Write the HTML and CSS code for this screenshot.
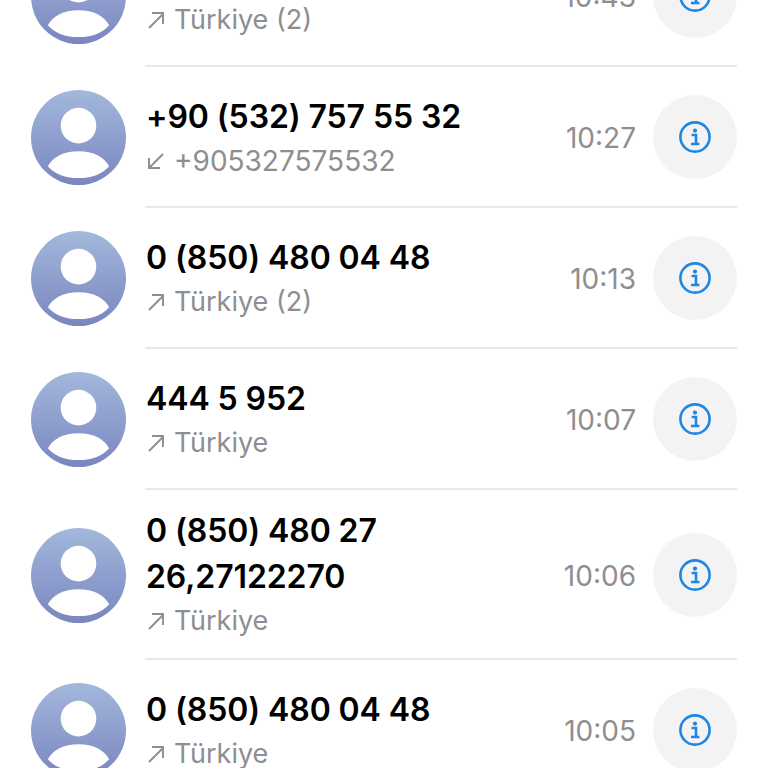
FILE: index.html
```html
<!DOCTYPE html>
<html lang="en">
<head>
  <meta charset="UTF-8">
  <meta name="viewport" content="width=device-width, initial-scale=1.0">
  <title>Recents</title>
  <link rel="stylesheet" href="styles.css">
</head>
<body>
  <svg class="defs" width="0" height="0" aria-hidden="true">
    <defs>
      <linearGradient id="avatarFill" x1="0" y1="0" x2="0" y2="1">
        <stop offset="0" stop-color="#a3b8dc"/>
        <stop offset="1" stop-color="#7a86bf"/>
      </linearGradient>
      <symbol id="avatar" viewBox="0 0 96 96">
        <circle cx="48" cy="48" r="48" fill="url(#avatarFill)"/>
        <circle cx="48" cy="36" r="18" fill="#fff"/>
        <path d="M17 77C22 68 33 62 48 62S74 68 79 77C72 85 61 89 48 89S24 85 17 77Z" fill="#fff"/>
      </symbol>
      <symbol id="info" viewBox="0 0 32 32">
        <circle cx="16" cy="16" r="14.6" fill="none" stroke="currentColor" stroke-width="2.6"/>
        <circle cx="16" cy="9.6" r="2.1" fill="currentColor"/>
        <path d="M12.6 14H17V22.4M12 23H20.4" fill="none" stroke="currentColor" stroke-width="2.6"/>
      </symbol>
      <symbol id="out" viewBox="0 0 20 20">
        <path d="M3 18L17 4M6 3H17V14" fill="none" stroke="currentColor" stroke-width="1.9"/>
      </symbol>
      <symbol id="in" viewBox="0 0 20 20">
        <path d="M17 3L3 17M3 7V17H14" fill="none" stroke="currentColor" stroke-width="1.9"/>
      </symbol>
    </defs>
  </svg>

  <ul class="calls">
    <li class="call">
      <svg class="avatar"><use href="#avatar"/></svg>
      <div class="call-main">
        <div class="call-text">
          <div class="number">0 (850) 480 04 48</div>
          <div class="detail place"><svg class="dir"><use href="#out"/></svg>Türkiye (2)</div>
        </div>
        <span class="time">10:43</span>
        <button class="info-btn"><svg class="info-icon"><use href="#info"/></svg></button>
      </div>
    </li>
    <li class="call">
      <svg class="avatar"><use href="#avatar"/></svg>
      <div class="call-main">
        <div class="call-text">
          <div class="number">+90 (532) 757 55 32</div>
          <div class="detail"><svg class="dir"><use href="#in"/></svg>+905327575532</div>
        </div>
        <span class="time">10:27</span>
        <button class="info-btn"><svg class="info-icon"><use href="#info"/></svg></button>
      </div>
    </li>
    <li class="call">
      <svg class="avatar"><use href="#avatar"/></svg>
      <div class="call-main">
        <div class="call-text">
          <div class="number">0 (850) 480 04 48</div>
          <div class="detail place"><svg class="dir"><use href="#out"/></svg>Türkiye (2)</div>
        </div>
        <span class="time">10:13</span>
        <button class="info-btn"><svg class="info-icon"><use href="#info"/></svg></button>
      </div>
    </li>
    <li class="call">
      <svg class="avatar"><use href="#avatar"/></svg>
      <div class="call-main">
        <div class="call-text">
          <div class="number">444 5 952</div>
          <div class="detail place"><svg class="dir"><use href="#out"/></svg>Türkiye</div>
        </div>
        <span class="time">10:07</span>
        <button class="info-btn"><svg class="info-icon"><use href="#info"/></svg></button>
      </div>
    </li>
    <li class="call">
      <svg class="avatar"><use href="#avatar"/></svg>
      <div class="call-main">
        <div class="call-text">
          <div class="number">0 (850) 480 27<br>26,27122270</div>
          <div class="detail place"><svg class="dir"><use href="#out"/></svg>Türkiye</div>
        </div>
        <span class="time">10:06</span>
        <button class="info-btn"><svg class="info-icon"><use href="#info"/></svg></button>
      </div>
    </li>
    <li class="call">
      <svg class="avatar"><use href="#avatar"/></svg>
      <div class="call-main">
        <div class="call-text">
          <div class="number">0 (850) 480 04 48</div>
          <div class="detail place"><svg class="dir"><use href="#out"/></svg>Türkiye</div>
        </div>
        <span class="time">10:05</span>
        <button class="info-btn"><svg class="info-icon"><use href="#info"/></svg></button>
      </div>
    </li>
  </ul>
</body>
</html>
```

FILE: styles.css
```css
* { margin: 0; padding: 0; box-sizing: border-box; }

html, body {
  height: 768px;
  overflow: hidden;
}

body {
  font-family: Inter, "Liberation Sans", sans-serif;
  background: #fff;
  color: #000;
}

.defs {
  display: block;
  height: 0;
}

/* the list is scrolled, first row is cut by the top edge */
.calls {
  list-style: none;
  margin-top: -74px;
}

.call {
  display: flex;
  align-items: center;
  padding: 0 31px;
}

.avatar {
  width: 95px;
  height: 95px;
  flex: none;
  margin-right: 19px;
}

.call-main {
  flex: 1;
  display: flex;
  align-items: center;
  min-height: 141px;
  padding: 16px 0 15px;
  border-bottom: 2px solid #e8e8ea;
}

.call-text {
  flex: 1;
}

.number {
  font-size: 32px;
  font-weight: 600;
  letter-spacing: -0.1px;
  line-height: 46px;
  padding: 2px 0 0 1px;
}

.detail {
  display: flex;
  align-items: center;
  gap: 8px;
  font-size: 28px;
  line-height: 44px;
  margin-top: -1px;
  color: #8e8e90;
}

.place {
  font-size: 27px;
}

.dir {
  width: 20px;
  height: 20px;
  flex: none;
  margin-left: 1px;
}

.time {
  font-size: 28px;
  color: #8e8e90;
  margin-right: 17px;
  padding-top: 2px;
}

.info-btn {
  width: 84px;
  height: 84px;
  flex: none;
  display: flex;
  align-items: center;
  justify-content: center;
  border: none;
  border-radius: 50%;
  background: #f3f3f4;
  color: #1f86e4;
}

.info-icon {
  width: 32px;
  height: 32px;
}
```
